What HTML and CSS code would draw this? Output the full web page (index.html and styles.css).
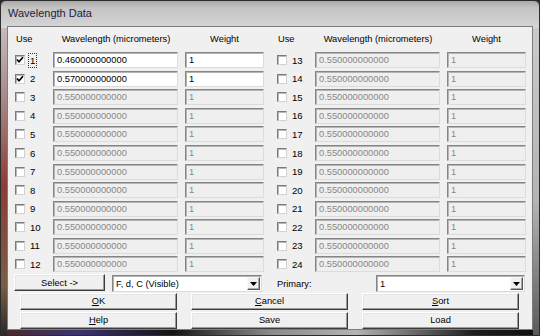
FILE: index.html
```html
<!DOCTYPE html>
<html>
<head>
<meta charset="utf-8">
<link rel="stylesheet" href="styles.css">
</head>
<body>
<div class="window">
  <div class="titlebar"><span class="title">Wavelength Data</span></div>
  <div class="client">
    <div class="table">
      <div class="group">
        <div class="h use">Use</div>
        <div class="h hwl">Wavelength (micrometers)</div>
        <div class="h hwt">Weight</div>

        <div class="cb"><svg width="8" height="8" viewBox="0 0 8 8"><path d="M1 3.5 L3 5.8 L7 1.2" fill="none" stroke="#000" stroke-width="1.7"/></svg></div>
        <div class="num"><span class="focus">1</span></div>
        <div class="field wl">0.460000000000</div>
        <div class="field wt">1</div>

        <div class="cb"><svg width="8" height="8" viewBox="0 0 8 8"><path d="M1 3.5 L3 5.8 L7 1.2" fill="none" stroke="#000" stroke-width="1.7"/></svg></div>
        <div class="num">2</div>
        <div class="field wl">0.570000000000</div>
        <div class="field wt">1</div>

        <div class="cb"></div><div class="num">3</div><div class="field wl off">0.550000000000</div><div class="field wt off">1</div>
        <div class="cb"></div><div class="num">4</div><div class="field wl off">0.550000000000</div><div class="field wt off">1</div>
        <div class="cb"></div><div class="num">5</div><div class="field wl off">0.550000000000</div><div class="field wt off">1</div>
        <div class="cb"></div><div class="num">6</div><div class="field wl off">0.550000000000</div><div class="field wt off">1</div>
        <div class="cb"></div><div class="num">7</div><div class="field wl off">0.550000000000</div><div class="field wt off">1</div>
        <div class="cb"></div><div class="num">8</div><div class="field wl off">0.550000000000</div><div class="field wt off">1</div>
        <div class="cb"></div><div class="num">9</div><div class="field wl off">0.550000000000</div><div class="field wt off">1</div>
        <div class="cb"></div><div class="num">10</div><div class="field wl off">0.550000000000</div><div class="field wt off">1</div>
        <div class="cb"></div><div class="num">11</div><div class="field wl off">0.550000000000</div><div class="field wt off">1</div>
        <div class="cb"></div><div class="num">12</div><div class="field wl off">0.550000000000</div><div class="field wt off">1</div>
      </div>
      <div class="group">
        <div class="h use">Use</div>
        <div class="h hwl">Wavelength (micrometers)</div>
        <div class="h hwt">Weight</div>
        <div class="cb"></div><div class="num">13</div><div class="field wl off">0.550000000000</div><div class="field wt off">1</div>
        <div class="cb"></div><div class="num">14</div><div class="field wl off">0.550000000000</div><div class="field wt off">1</div>
        <div class="cb"></div><div class="num">15</div><div class="field wl off">0.550000000000</div><div class="field wt off">1</div>
        <div class="cb"></div><div class="num">16</div><div class="field wl off">0.550000000000</div><div class="field wt off">1</div>
        <div class="cb"></div><div class="num">17</div><div class="field wl off">0.550000000000</div><div class="field wt off">1</div>
        <div class="cb"></div><div class="num">18</div><div class="field wl off">0.550000000000</div><div class="field wt off">1</div>
        <div class="cb"></div><div class="num">19</div><div class="field wl off">0.550000000000</div><div class="field wt off">1</div>
        <div class="cb"></div><div class="num">20</div><div class="field wl off">0.550000000000</div><div class="field wt off">1</div>
        <div class="cb"></div><div class="num">21</div><div class="field wl off">0.550000000000</div><div class="field wt off">1</div>
        <div class="cb"></div><div class="num">22</div><div class="field wl off">0.550000000000</div><div class="field wt off">1</div>
        <div class="cb"></div><div class="num">23</div><div class="field wl off">0.550000000000</div><div class="field wt off">1</div>
        <div class="cb"></div><div class="num">24</div><div class="field wl off">0.550000000000</div><div class="field wt off">1</div>
      </div>
    </div>

    <div class="selrow">
      <div class="btn sel">Select -&gt;</div>
      <div class="combo c1"><span class="ctext">F, d, C (Visible)</span><span class="arrow"><svg width="7" height="4" viewBox="0 0 7 4"><path d="M0 0 H7 L3.5 4 Z" fill="#000"/></svg></span></div>
      <div class="plabel">Primary:</div>
      <div class="combo c2"><span class="ctext">1</span><span class="arrow"><svg width="7" height="4" viewBox="0 0 7 4"><path d="M0 0 H7 L3.5 4 Z" fill="#000"/></svg></span></div>
    </div>

    <div class="btnrow">
      <div class="btn big"><u>O</u>K</div>
      <div class="btn big"><u>C</u>ancel</div>
      <div class="btn big"><u>S</u>ort</div>
    </div>
    <div class="btnrow second">
      <div class="btn big"><u>H</u>elp</div>
      <div class="btn big">Save</div>
      <div class="btn big">Load</div>
    </div>
  </div>
</div>
</body>
</html>
```

FILE: styles.css
```css
html, body {
  margin: 0;
  padding: 0;
  width: 540px;
  height: 336px;
  overflow: hidden;
  background: #2a2a2a;
}

.window {
  width: 540px;
  height: 336px;
  box-sizing: border-box;
  padding: 0 6px 5px 6px;
  display: flex;
  flex-direction: column;
  border: 1px solid #2c2c2c;
  border-radius: 6px 6px 0 0;
  background:
    linear-gradient(to bottom, #a9a9a9 0, #c4c4c4 7px, #d3d3d3 24px, #d6d6d6 27px) top / 100% 27px no-repeat,
    linear-gradient(to bottom, #cfcfcf 0%, #a88686 30%, #8c3c36 55%, #7a5e42 85%, #2a2a2a 100%) left / 6px 100% no-repeat,
    linear-gradient(to bottom, #cdcdcd 0%, #b4b4b4 60%, #5a5a5a 100%) right / 6px 100% no-repeat,
    linear-gradient(to right, #4a2828 0, #3c3470 14%, #141414 32%, #8a8a8a 50%, #b4b4b4 66%, #1c1c1c 88%, #101010 100%) bottom / 100% 5px no-repeat,
    #bcbcbc;
  font-family: "Liberation Sans", Arial, sans-serif;
  font-size: 9.3px;
  color: #000;
}

.titlebar {
  height: 25px;
  display: flex;
  align-items: center;
  padding-left: 1px;
  padding-bottom: 1px;
  box-sizing: border-box;
}

.title {
  font-family: "Liberation Sans", Arial, sans-serif;
  font-size: 11px;
  color: #1e2040;
}

.client {
  height: 304px;
  box-sizing: border-box;
  background: #f0f0f0;
  border: 1px solid #7d7d7d;
  display: flex;
  flex-direction: column;
}

.table {
  display: flex;
}

.group {
  width: 263px;
  display: grid;
  grid-template-columns: 7px 10px 28px 125px 7px 79px;
  grid-template-rows: 24px repeat(12, 18.55px);
}

.h {
  align-self: center;
  white-space: nowrap;
}
.h.use { grid-column: 2 / 4; padding-left: 1px; }
.h.hwl { grid-column: 4; text-align: center; padding-left: 1px; }
.h.hwt { grid-column: 6; text-align: center; }

.cb {
  grid-column: 2;
  width: 10px;
  height: 10px;
  box-sizing: border-box;
  align-self: center;
  background: #fff;
  border-style: solid;
  border-width: 1px;
  border-color: #7a7a7a #d2d2d2 #d2d2d2 #7a7a7a;
  box-shadow: inset 1px 1px 0 #b8b8b8;
  display: flex;
  align-items: center;
  justify-content: center;
}
.cb svg { display: block; }

.num {
  grid-column: 3;
  align-self: center;
  padding-left: 5px;
  font-size: 9.6px;
}

.focus {
  display: inline-block;
  border: 1px dotted #333;
  padding: 2px 1px 2px 1px;
  margin-left: -2px;
  line-height: 9px;
}

.field {
  height: 16px;
  box-sizing: border-box;
  align-self: center;
  background: #fff;
  border-style: solid;
  border-width: 1px;
  border-color: #858585 #dcdcdc #dcdcdc #858585;
  box-shadow: inset 1px 1px 0 #b4b4b4;
  padding: 0 0 0 3px;
  line-height: 14px;
  white-space: nowrap;
  overflow: hidden;
}
.field.wl { grid-column: 4; }
.field.wt { grid-column: 6; }
.field.off {
  background: #efefef;
  color: #878787;
}

.selrow {
  height: 17px;
  margin-top: 0.6px;
  display: flex;
  align-items: stretch;
  padding-left: 6px;
}

.btn {
  box-sizing: border-box;
  background: #f0f0f0;
  border-style: solid;
  border-width: 1px;
  border-color: #ffffff #3c3c3c #3c3c3c #ffffff;
  box-shadow: inset -1px -1px 0 #9a9a9a, inset 1px 1px 0 #e6e6e6;
  display: flex;
  align-items: center;
  justify-content: center;
  white-space: nowrap;
}

.btn.sel {
  width: 91px;
  height: 17px;
}

.combo {
  height: 17px;
  box-sizing: border-box;
  background: #fff;
  border-style: solid;
  border-width: 1px;
  border-color: #858585 #dcdcdc #dcdcdc #858585;
  box-shadow: inset 1px 1px 0 #b4b4b4;
  display: flex;
  align-items: center;
  margin-top: 1px;
}
.combo.c1 { width: 150px; margin-left: 7px; }
.combo.c2 { width: 149px; }

.ctext {
  flex: 1;
  padding-left: 3px;
  white-space: nowrap;
}

.arrow {
  width: 13px;
  height: 13px;
  box-sizing: border-box;
  margin-right: 1px;
  background: #f0f0f0;
  border-style: solid;
  border-width: 1px;
  border-color: #f8f8f8 #555 #555 #f8f8f8;
  box-shadow: inset -1px -1px 0 #a8a8a8;
  display: flex;
  align-items: center;
  justify-content: center;
}
.arrow svg { display: block; }

.plabel {
  width: 99px;
  margin-left: 15px;
  padding-top: 2px;
  align-self: center;
}

.btnrow {
  display: flex;
  gap: 14px;
  padding-left: 12px;
  margin-top: 1.5px;
  height: 17px;
}
.btnrow.second { margin-top: 2px; }

.btn.big {
  width: 157px;
  height: 17px;
}

u { text-decoration: underline; text-underline-offset: 1px; }
```
